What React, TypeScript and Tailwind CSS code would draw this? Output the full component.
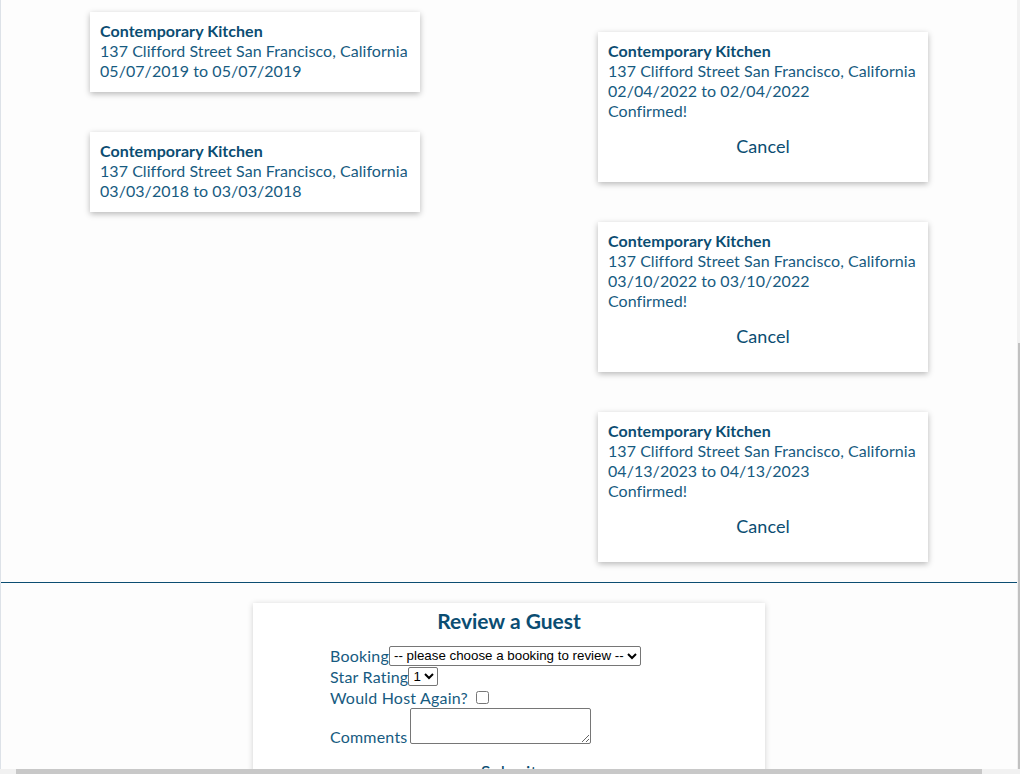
const blue = 'text-[#0b4d72]'

type Booking = { dates: string; confirmed?: boolean }

const past: Booking[] = [
  { dates: '05/07/2019 to 05/07/2019' },
  { dates: '03/03/2018 to 03/03/2018' },
]

const upcoming: Booking[] = [
  { dates: '02/04/2022 to 02/04/2022', confirmed: true },
  { dates: '03/10/2022 to 03/10/2022', confirmed: true },
  { dates: '04/13/2023 to 04/13/2023', confirmed: true },
]

function BookingCard({ b }: { b: Booking }) {
  return (
    <div className="w-[330px] bg-white px-[10px] pt-[9px] pb-[11px] shadow-[0_2px_6px_rgba(0,0,0,0.28)] leading-[20px] text-[16px] text-[#175b81] tracking-[0.05px]">
      <div className={`font-bold ${blue}`}>Contemporary Kitchen</div>
      <div>137 Clifford Street San Francisco, California</div>
      <div>{b.dates}</div>
      {b.confirmed && (
        <>
          <div>Confirmed!</div>
          <button className={`w-full h-[50px] flex items-center justify-center text-[18px] ${blue}`}>
            Cancel
          </button>
        </>
      )}
    </div>
  )
}

export default function App() {
  return (
    <div
      className="w-[1020px] h-[774px] overflow-hidden flex flex-col bg-[#fdfdfd]"
      style={{ fontFamily: 'Lato, "Open Sans", sans-serif' }}
    >
      <div className="flex flex-1 min-h-0">
        <div className="flex-1 min-w-0 border-l border-[#dde2e8] overflow-hidden">
          {/* bookings */}
          <div className="grid grid-cols-2">
            <div className="flex flex-col items-center gap-[40px] pt-[12px]">
              {past.map((b, i) => (
                <BookingCard key={i} b={b} />
              ))}
            </div>
            <div className="flex flex-col items-center gap-[40px] pt-[32px]">
              {upcoming.map((b, i) => (
                <BookingCard key={i} b={b} />
              ))}
            </div>
          </div>

          <div className="mt-[20px] h-[1px] bg-[#0b4d72]" />

          {/* review form */}
          <div className="mx-auto mt-[20px] w-[512px] h-[300px] bg-white shadow-[0_1px_6px_rgba(0,0,0,0.18)] pt-[4px]">
            <h2 className={`text-center text-[21px] leading-[28px] font-bold ${blue}`}>Review a Guest</h2>
            <div className="w-[358px] mx-auto mt-[10px] text-[16px] leading-[21px] text-[#175b81] tracking-[0.2px]">
              <div className="flex items-center h-[21px]">
                <span>Booking</span>
                <select
                  className="h-[20px] w-[252px] border border-[#767676] rounded-[2px] bg-white text-black text-[13.33px] tracking-normal"
                  style={{ fontFamily: '"Liberation Sans", Arial, sans-serif' }}
                >
                  <option>-- please choose a booking to review --</option>
                </select>
              </div>
              <div className="flex items-center h-[21px]">
                <span>Star Rating</span>
                <select
                  className="h-[19px] w-[30px] border border-[#767676] rounded-[2px] bg-white text-black text-[13.33px] tracking-normal"
                  style={{ fontFamily: '"Liberation Sans", Arial, sans-serif' }}
                >
                  <option>1</option>
                  <option>2</option>
                  <option>3</option>
                  <option>4</option>
                  <option>5</option>
                </select>
              </div>
              <div className="flex items-center h-[21px]">
                <span>Would Host Again?</span>
                <input type="checkbox" className="ml-[8px] w-[13px] h-[13px]" />
              </div>
              <div className="flex items-end">
                <span className="leading-[20px] mb-[-3px]">Comments</span>
                <textarea className="ml-[3px] w-[181px] h-[36px] border border-[#767676] rounded-[2px] bg-white" />
              </div>
              <div className={`mt-[18px] text-center text-[18px] ${blue}`}>Submit</div>
            </div>
          </div>
        </div>

        {/* vertical scrollbar */}
        <div className="w-[3px] bg-[#f1f1f1] flex flex-col">
          <div className="h-[343px]" />
          <div className="flex-1 w-[2px] ml-[1px] bg-[#c1c1c1]" />
        </div>
      </div>

      {/* horizontal scrollbar */}
      <div className="h-[5px] bg-[#f1f1f1] flex">
        <div className="w-[16px]" />
        <div className="w-[966px] bg-[#c8c8c8]" />
      </div>
    </div>
  )
}
